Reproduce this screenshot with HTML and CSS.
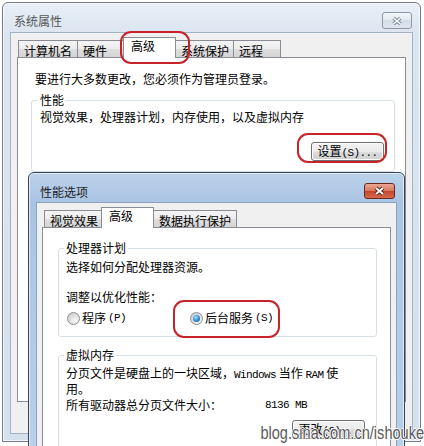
FILE: index.html
```html
<!DOCTYPE html>
<html lang="zh-CN">
<head>
    <meta charset="UTF-8">
    <meta name="viewport" content="width=device-width, initial-scale=1.0">
    <title>系统属性</title>
    <link rel="stylesheet" href="styles.css">
</head>
<body>
    <div class="desktop">
        <section class="window outer">
            <div class="titlebar">
                <span class="title">系统属性</span>
                <span class="close">
                    <svg width="12" height="10" viewBox="0 0 12 10">
                        <path d="M2.5 2 9.5 8M9.5 2 2.5 8" stroke="#7d8997" stroke-width="3.6" fill="none"/>
                        <path d="M2.5 2 9.5 8M9.5 2 2.5 8" stroke="#fafbfd" stroke-width="1.6" fill="none"/>
                    </svg>
                </span>
            </div>
            <div class="client">
                <div class="tabs">
                    <div class="tab t-name">计算机名</div>
                    <div class="tab t-hw">硬件</div>
                    <div class="tab on t-adv">高级</div>
                    <div class="tab t-prot">系统保护</div>
                    <div class="tab t-remote">远程</div>
                </div>
                <div class="panel">
                    <p class="note">要进行大多数更改，您必须作为管理员登录。</p>
                    <fieldset class="group perf">
                        <legend>性能</legend>
                        <p class="desc">视觉效果，处理器计划，内存使用，以及虚拟内存</p>
                        <div class="actions">
                            <button class="btn">设置<span class="en">(S)...</span></button>
                        </div>
                    </fieldset>
                </div>
            </div>
        </section>

        <section class="window inner">
            <div class="titlebar">
                <span class="title">性能选项</span>
                <span class="close">
                    <svg width="13" height="10" viewBox="0 0 13 10">
                        <path d="M3 2 10 8M10 2 3 8" stroke="#5a2116" stroke-width="3.8" fill="none"/>
                        <path d="M3 2 10 8M10 2 3 8" stroke="#ffffff" stroke-width="1.9" fill="none"/>
                    </svg>
                </span>
            </div>
            <div class="client">
                <div class="tabs">
                    <div class="tab t-visual">视觉效果</div>
                    <div class="tab on t-adv2">高级</div>
                    <div class="tab t-dep">数据执行保护</div>
                </div>
                <div class="panel">
                    <fieldset class="group cpu">
                        <legend>处理器计划</legend>
                        <p class="intro">选择如何分配处理器资源。</p>
                        <p class="ask">调整以优化性能：</p>
                        <div class="radios">
                            <label class="radio"><span class="dot"></span>程序<span class="en">(P)</span></label>
                            <label class="radio"><span class="dot on"></span>后台服务<span class="en">(S)</span></label>
                        </div>
                    </fieldset>
                    <fieldset class="group vmem">
                        <legend>虚拟内存</legend>
                        <p class="paging">分页文件是硬盘上的一块区域，<span class="en">Windows</span> 当作 <span class="en">RAM</span> 使<br>用。</p>
                        <div class="size">
                            <span class="key">所有驱动器总分页文件大小：</span>
                            <span class="en">8136 MB</span>
                        </div>
                        <div class="actions">
                            <button class="btn">更改<span class="en">(C)...</span></button>
                        </div>
                    </fieldset>
                </div>
            </div>
        </section>

        <div class="ring ring-tab"></div>
        <div class="ring ring-btn"></div>
        <div class="ring ring-radio"></div>

        <div class="watermark">blog.sina.com.cn/ishouke</div>
    </div>
</body>
</html>
```

FILE: styles.css
```css
*{
    margin: 0;
    padding: 0;
    box-sizing: border-box;
}
body{
    width: 424px;
    height: 446px;
    overflow: hidden;
    background: #fff;
    font-family: "Noto Sans CJK SC", "Liberation Sans", sans-serif;
    font-size: 12px;
    line-height: 14px;
    color: #000;
}
.desktop{
    position: relative;
    width: 424px;
    height: 446px;
    overflow: hidden;
}

/* windows */
.window{
    position: absolute;
    display: flex;
    flex-direction: column;
    padding: 0 7px 7px;
    border: 1px solid #6f7b8a;
    border-radius: 6px 6px 0 0;
}
.outer{
    left: 2px;
    top: 2px;
    width: 419px;
    height: 440px;
    background: linear-gradient(#e9eff7, #dbe5f0 30px, #d5e0ed);
    box-shadow: inset 0 0 0 1px rgba(255, 255, 255, .7);
}
.inner{
    left: 28px;
    top: 172px;
    width: 377px;
    height: 300px;
    border-color: #34445a;
    background: linear-gradient(#bcd2eb, #a9c4e3 30px, #bcd1e9);
    box-shadow: inset 0 0 0 1px rgba(255, 255, 255, .6);
}
.titlebar{
    display: flex;
    justify-content: space-between;
    align-items: flex-start;
    height: 29px;
}
.title{
    padding: 11px 0 0 4px;
    color: #555;
}
.inner .title{
    padding-top: 12px;
    color: #1e1e1e;
}
.close{
    display: flex;
    align-items: center;
    justify-content: center;
    width: 30px;
    height: 17px;
    margin: 9px 1px 0 0;
    border: 1px solid #8b98a8;
    border-radius: 3px;
    background: linear-gradient(#f2f6fa, #e3e9f1 50%, #d3dce7 50%, #dfe6ef);
}
.inner .close{
    width: 31px;
    height: 16px;
    margin: 10px 2px 0 0;
    border-color: #6b2a1e;
    background: linear-gradient(#eaa995, #d8775f 50%, #c3452b 50%, #d4694d);
}
.client{
    flex: 1;
    display: flex;
    flex-direction: column;
    padding: 4px 6px 0;
    border: 1px solid #a3b3c6;
    background: #f0f0f0;
}
.inner .client{
    padding: 4px 5px 0;
    border-color: #8aa3c1;
}

/* tabs */
.tabs{
    display: flex;
    align-items: flex-end;
    height: 20px;
    padding-left: 1px;
}
.inner .tabs{
    padding-left: 2px;
}
.tab{
    height: 17px;
    margin-right: -1px;
    padding: 4px 0 0 5px;
    border: 1px solid #898c95;
    border-bottom: 0;
    line-height: 12px;
    white-space: nowrap;
    background: linear-gradient(#f4f4f4, #ececec 50%, #dfdfdf 50%, #d4d4d4);
}
.tab.on{
    position: relative;
    z-index: 1;
    height: 21px;
    margin-bottom: -1px;
    padding: 2px 0 0 7px;
    background: #fff;
}
.t-name{ width: 60px; }
.t-hw{ width: 47px; }
.t-adv{ width: 53px; }
.t-prot{ width: 59px; }
.t-remote{ width: 48px; }
.t-visual{ width: 58px; }
.t-adv2{ width: 53px; }
.t-dep{ width: 84px; }

.panel{
    border: 1px solid #898c95;
    background: #fff;
}
.outer .panel{
    height: 345px;
    padding: 14px 10px 0 13px;
}
.inner .panel{
    flex: 1;
    padding: 13px 13px 0 15px;
}
.note{
    padding-left: 4px;
}

/* group boxes */
.group{
    min-width: 0;
    border: 1px solid #d5dfe5;
    border-radius: 3px;
    padding: 0 10px 10px 8px;
}
.group legend{
    padding: 0 2px;
    margin-left: -2px;
}
.perf{
    margin-top: 7px;
}
.desc{
    margin-top: 3px;
}
.actions{
    display: flex;
    justify-content: flex-end;
    margin-top: 18px;
}
.inner .group{
    padding: 0 11px 11px 7px;
}
.intro{
    margin-top: 5px;
}
.ask{
    margin-top: 16px;
}
.radios{
    display: flex;
    align-items: center;
    height: 14px;
    margin-top: 7px;
    padding-left: 1px;
}
.radio{
    display: flex;
    align-items: center;
    gap: 2px;
}
.radio:first-child{
    width: 123px;
}
.dot{
    display: flex;
    align-items: center;
    justify-content: center;
    width: 13px;
    height: 13px;
    border: 1px solid #8e8f8f;
    border-radius: 50%;
    background: radial-gradient(circle at 65% 70%, #fbfbfb, #d0d0d0 75%);
}
.dot.on::after{
    content: "";
    width: 7px;
    height: 7px;
    border-radius: 50%;
    background: radial-gradient(circle at 40% 35%, #b4e2ff 0, #3a98e0 45%, #0f4f98 100%);
}
.vmem{
    margin-top: 11px;
}
.paging{
    margin-top: 4px;
    line-height: 13px;
}
.size{
    display: flex;
    margin-top: 3px;
}
.size .key{
    width: 199px;
}
.vmem .actions{
    margin-top: 8px;
}

.en{
    font-family: "Liberation Mono", monospace;
    font-size: 11px;
    letter-spacing: -0.6px;
}

/* push buttons */
.btn{
    width: 73px;
    height: 19px;
    border: 1px solid #707070;
    border-radius: 3px;
    background: linear-gradient(#f2f2f2, #ebebeb 50%, #dddddd 50%, #cfcfcf);
    box-shadow: inset 0 0 0 1px #fcfcfc;
    font: inherit;
    line-height: 15px;
    color: #000;
}

/* red marks drawn over the screenshot */
.ring{
    position: absolute;
    border: 2px solid #c8232a;
    border-radius: 11px;
}
.ring-tab{
    left: 120px;
    top: 31px;
    width: 70px;
    height: 33px;
}
.ring-btn{
    left: 297px;
    top: 133px;
    width: 90px;
    height: 30px;
}
.ring-radio{
    left: 173px;
    top: 300px;
    width: 107px;
    height: 38px;
}

.watermark{
    position: absolute;
    right: 0;
    top: 423px;
    font-family: "Liberation Sans", sans-serif;
    font-size: 18px;
    line-height: 20px;
    white-space: nowrap;
    color: #5a5a5a;
    text-shadow: 1px 0 #fff, -1px 0 #fff, 0 1px #fff, 0 -1px #fff;
    transform: scaleX(0.81);
    transform-origin: right center;
}
```
